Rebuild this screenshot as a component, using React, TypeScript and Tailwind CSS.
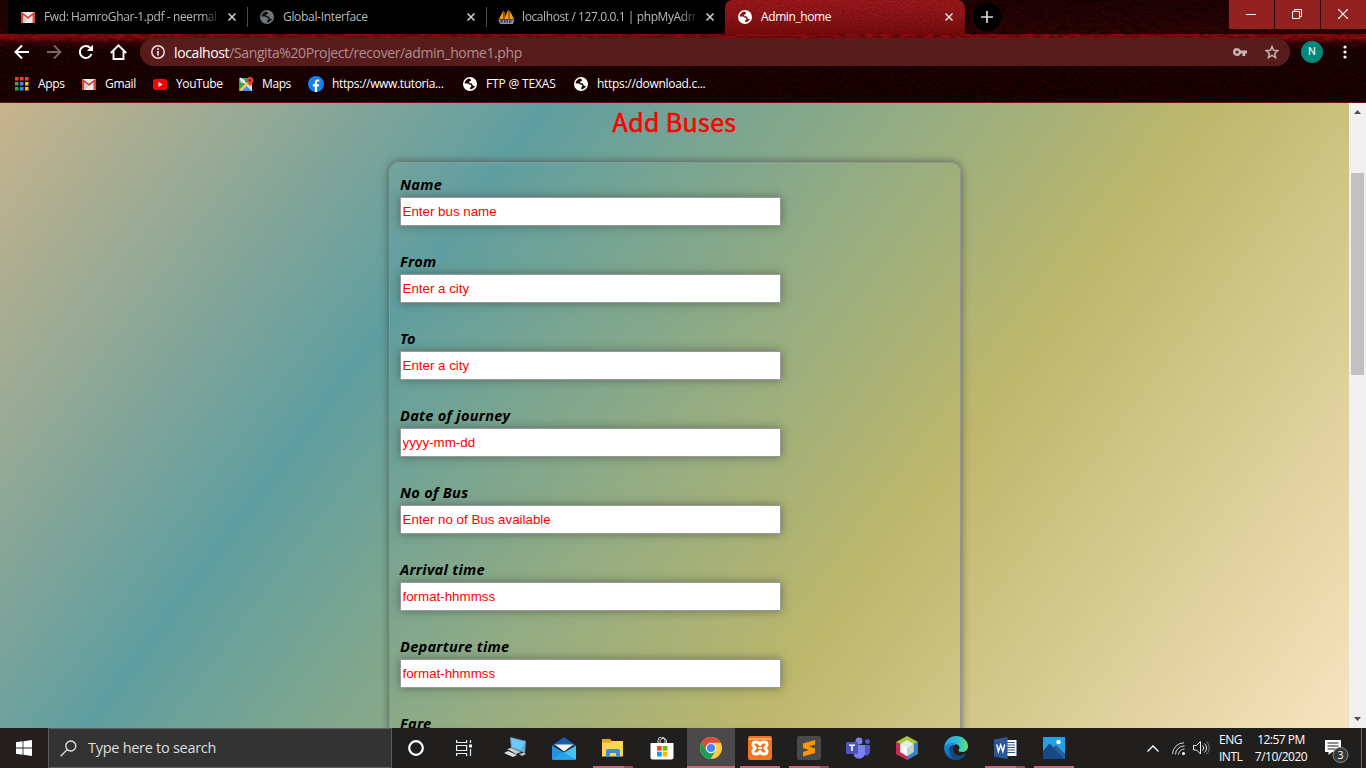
import React from "react";

const ui = "font-['Open_Sans','Noto_Sans',sans-serif]";

function Texture({ id, className, freq, matrix }: { id: string; className: string; freq: string; matrix: string }) {
  return (
    <svg className={"absolute inset-0 h-full w-full pointer-events-none " + className} aria-hidden="true">
      <filter id={id} x="0" y="0" width="100%" height="100%" colorInterpolationFilters="sRGB">
        <feTurbulence type="fractalNoise" baseFrequency={freq} numOctaves={4} seed={7} />
        <feColorMatrix type="matrix" values={matrix} />
      </filter>
      <rect width="100%" height="100%" filter={`url(#${id})`} />
    </svg>
  );
}

function GmailIcon() {
  return (
    <svg width="14" height="11" viewBox="0 0 14 11" className="shrink-0">
      <rect width="14" height="11" rx="0.8" fill="#e9e9e9" />
      <path d="M0 .8v9.4c0 .5.3.8.8.8H2.4V3.3L7 6.9l4.600-3.600V11h1.600c.5 0 .8-.3.8-.8V.8c0-.5-.4-.8-.9-.8L7 4.700.900 0C.4 0 0 .3 0 .8z" fill="#d9453a" />
      <path d="M2.400 11V4L6.600 7.300 3 11z" fill="#cfcfcf" />
    </svg>
  );
}

function Globe({ fg, bg }: { fg: string; bg: string }) {
  return (
    <svg width="14" height="14" viewBox="0 0 14 14" className="relative shrink-0">
      <circle cx="7" cy="7" r="7" fill={fg} />
      <path d="M6.200 1.600C3.800 2 1.800 4 1.600 6.400l3.300.1c.8.1 1 .8 1.400 1.100.7.4 1.700.1 2 .8.3.800-.3 1-.7 1.500-.4.6-.2 1.700-.9 2.400 2.200.2 4.600-1.200 5.400-3.500-.8.4-1.700.4-2.300-.2-.6-.7-.3-1.500-1-2C8 6 6.800 6.500 6.200 5.700c-.4-.7.3-1.100.9-1.400.7-.3 1.100-.7 1-1.300-.2-.7-1.100-.8-1.900-1.400z" fill={bg} />
    </svg>
  );
}

function SailIcon() {
  return (
    <svg width="17" height="16" viewBox="0 0 17 16" className="shrink-0">
      <path d="M5.500 1 1 10h4.500zM10.500 0 6.200 10h4.600zM12 2l-.5 8H16z" fill="#f89c0e" />
      <path d="M6.500 3v7M11.500 2v8" stroke="#a35f0c" strokeWidth="1" />
      <path d="M0 10.500h16.500l-1.500 4.500H2z" fill="#8b8da8" />
      <path d="M3 14v-2.500h1.500V13H3M6.500 14v-3l1.500 2 1.500-2v3M11.500 14v-2.500H13V13h-1.500" stroke="#34354e" fill="none" strokeWidth=".8" />
    </svg>
  );
}

function CloseX({ color = "#d5d5d5" }: { color?: string }) {
  return (
    <svg width="8" height="8" viewBox="0 0 8 8" className="shrink-0">
      <path d="M.5.5l7 7M7.500.5l-7 7" stroke={color} strokeWidth="1.500" />
    </svg>
  );
}

function TabStrip() {
  return (
    <div className={"relative flex h-[34px] items-start text-[12px] " + ui}>
      <div className="ml-[8px] flex h-[34px] w-[240px] items-center bg-black pl-[13px]">
        <GmailIcon />
        <span className="ml-[9px] w-[176px] overflow-hidden whitespace-nowrap tracking-[-0.4px] text-[#b9b9b9] [mask-image:linear-gradient(to_right,black_90%,transparent)]">Fwd: HamroGhar-1.pdf - neermal</span>
        <span className="ml-[8px] flex"><CloseX /></span>
      </div>
      <div className="flex h-[34px] w-[239px] items-center bg-black">
        <i className="-ml-px h-[20px] w-px bg-[#505050]" />
        <span className="ml-[12px] flex"><Globe fg="#70757a" bg="#101010" /></span>
        <span className="ml-[9px] w-[176px] whitespace-nowrap tracking-[-0.32px] text-[#b9b9b9]">Global-Interface</span>
        <span className="ml-[8px] flex"><CloseX /></span>
      </div>
      <div className="flex h-[34px] w-[238px] items-center rounded-br-[8px] bg-black">
        <i className="-ml-px h-[20px] w-px bg-[#505050]" />
        <span className="ml-[11px] flex"><SailIcon /></span>
        <span className="ml-[7px] w-[176px] overflow-hidden whitespace-nowrap tracking-[-0.4px] text-[#b9b9b9] [mask-image:linear-gradient(to_right,black_90%,transparent)]">localhost / 127.0.0.1 | phpMyAdm</span>
        <span className="ml-[8px] flex"><CloseX /></span>
      </div>
      <div className="relative flex h-[34px] w-[240px] items-center overflow-hidden rounded-t-[8px] bg-linear-to-b from-[#9f191d] via-[#8f1519] to-[#790a0c] pl-[13px] text-white">
        <Texture id="tabTex" className="opacity-25" freq="0.4 0.6" matrix="0 0 0 0 0.2  0 0 0 0 0  0 0 0 0 0  2.5 0 0 0 -0.9" />
        <Globe fg="#ffffff" bg="#8f171b" />
        <span className="relative ml-[9px] w-[176px] whitespace-nowrap tracking-[-0.4px]">Admin_home</span>
        <span className="relative ml-[8px] flex"><CloseX color="#f3dede" /></span>
      </div>
      <div className="ml-[8px] mt-[3px] flex h-[28px] w-[28px] items-center justify-center rounded-full bg-black">
        <svg width="12" height="12" viewBox="0 0 12 12"><path d="M6 0v12M0 6h12" stroke="#d8d8d8" strokeWidth="1.700" /></svg>
      </div>
      <div className="ml-auto flex h-[29px] gap-px bg-[#2a0505]">
        <div className="flex w-[45px] items-center justify-center bg-[#92211f] pb-px pr-[2px]">
          <svg width="10" height="10"><path d="M0 5.500h10" stroke="#fff" /></svg>
        </div>
        <div className="flex w-[45px] items-center justify-center bg-[#92211f] pb-px pr-[2px]">
          <svg width="10" height="10" fill="none" stroke="#fff"><path d="M.5 2.500h7v7h-7zM2.500 2.500v-2h7v7h-2" /></svg>
        </div>
        <div className="flex w-[45px] items-center justify-center bg-[#92211f] pb-px pr-[2px]">
          <svg width="10" height="10"><path d="M0 0l10 10M10 0L0 10" stroke="#fff" strokeWidth="1.200" /></svg>
        </div>
      </div>
    </div>
  );
}

function Toolbar() {
  return (
    <div className="relative flex h-[36px] items-center">
      <svg className="ml-[14px]" width="16" height="16" viewBox="0 0 16 16" fill="none" stroke="#fff" strokeWidth="2"><path d="M15 8H2M8 1.500 1.500 8 8 14.500" /></svg>
      <svg className="ml-[16px]" width="16" height="16" viewBox="0 0 16 16" fill="none" stroke="#7d6565" strokeWidth="1.800"><path d="M1 8h13M8 1.500 14.500 8 8 14.500" /></svg>
      <svg className="ml-[16px]" width="16" height="16" viewBox="0 0 16 16"><path d="M13.500 10A6 6 0 1 1 12.400 4" fill="none" stroke="#fff" strokeWidth="2" /><path d="M15 .8v6.200H8.800z" fill="#fff" /></svg>
      <svg className="ml-[16px]" width="17" height="16" viewBox="0 0 17 16" fill="none" stroke="#fff" strokeWidth="1.900"><path d="M.8 9 8.500 1.400 16.200 9M3.500 7v8h10V7" /></svg>
      <div className={"ml-[13px] flex h-[28px] w-[1150px] items-center rounded-full bg-[#581c1d] pl-[11px] " + ui}>
        <svg width="14" height="14" viewBox="0 0 14 14"><circle cx="7" cy="7" r="6.200" fill="none" stroke="#eee0e0" strokeWidth="1.500" /><path d="M7 6v4.500M7 3.300v1.600" stroke="#eee0e0" strokeWidth="1.700" /></svg>
        <span className="ml-[9px] whitespace-nowrap text-[14px] tracking-[-0.38px] text-[#ae8e8e]"><span className="text-white">localhost</span>/Sangita%20Project/recover/admin_home1.php</span>
        <svg className="ml-auto" width="14" height="8" viewBox="0 0 14 8"><path fillRule="evenodd" fill="#c6b6b6" d="M4 0a4 4 0 1 0 3.700 5.500H9.500V8h2.700V5.500H14v-3H7.700A4 4 0 0 0 4 0zm0 2.400a1.600 1.600 0 1 1 0 3.200 1.600 1.600 0 0 1 0-3.200z" /></svg>
        <svg className="ml-[18px] mr-[11px]" width="14" height="14" viewBox="0 0 14 14" fill="none" stroke="#c6b6b6" strokeWidth="1.400"><path d="M7 1.500l1.600 3.800 4.200.4-3.200 2.700 1 4.200L7 10.400l-3.600 2.200 1-4.200L1.200 5.700l4.200-.4z" /></svg>
      </div>
      <div className={"ml-[11px] flex h-[22px] w-[22px] items-center justify-center rounded-full bg-[#00897b] text-[11px] text-white font-['Roboto',sans-serif]"}>N</div>
      <svg className="ml-[20px]" width="4" height="14" fill="#fff"><circle cx="2" cy="2" r="1.600" /><circle cx="2" cy="7" r="1.600" /><circle cx="2" cy="12" r="1.600" /></svg>
    </div>
  );
}

function Bookmarks() {
  const dots = ["#e94335", "#e94335", "#e94335", "#34a853", "#4285f4", "#fbbc05", "#34a853", "#4285f4", "#fbbc05"];
  return (
    <div className={"relative flex h-[28px] items-center whitespace-nowrap text-[12px] text-white " + ui}>
      <svg className="ml-[15px]" width="14" height="14">{dots.map((c, i) => <rect key={i} x={(i % 3) * 5} y={Math.floor(i / 3) * 5} width="3.500" height="3.500" fill={c} />)}</svg>
      <span className="ml-[9px] w-[28px] tracking-[-0.3px]">Apps</span>
      <span className="ml-[16px] flex"><GmailIcon /></span>
      <span className="ml-[9px] w-[31px] tracking-[-0.3px]">Gmail</span>
      <svg className="ml-[17px]" width="14" height="11" viewBox="0 0 14 11"><rect width="14" height="11" rx="2.500" fill="#f00" /><path d="M5.500 3v5l4-2.500z" fill="#fff" /></svg>
      <span className="ml-[9px] w-[46px] tracking-[-0.4px]">YouTube</span>
      <svg className="ml-[17px]" width="15" height="15" viewBox="0 0 15 15">
        <rect y="1" width="13" height="13" rx="1" fill="#2fa35a" /><path d="M0 14 7 7l6.500 7z" fill="#4b8df8" /><path d="M1 1l12 12" stroke="#fff" strokeWidth="1.500" /><path d="M0 13 9 4l2 2-8.500 8z" fill="#f4d13a" /><path d="M13 14V8l-3-1-2 2 5 5z" fill="#dcdcdc" /><circle cx="3.500" cy="4" r="1.700" fill="none" stroke="#fff" />
        <path d="M11 0a3.500 3.500 0 0 0-3.500 3.500C7.500 6 10 6.500 11 9.500c1-3 3.500-3.500 3.500-6A3.500 3.500 0 0 0 11 0z" fill="#ea4335" /><circle cx="11" cy="3.500" r="1.300" fill="#8c1b14" />
      </svg>
      <span className="ml-[8px] w-[30px] tracking-[-0.4px]">Maps</span>
      <svg className="ml-[16px]" width="16" height="16" viewBox="0 0 16 16"><circle cx="8" cy="8" r="8" fill="#1580ef" /><path d="M6.800 16v-5.500H4.900V8.200h1.900V6.600c0-2 1.100-3 2.900-3 .8 0 1.500.1 1.500.1v1.900h-1c-1 0-1.200.6-1.200 1.200v1.400h2.100l-.4 2.300H9V16z" fill="#fff" /></svg>
      <span className="ml-[8px] w-[113px] tracking-[-0.35px]">https://www.tutoria...</span>
      <span className="ml-[18px] flex"><Globe fg="#fff" bg="#170304" /></span>
      <span className="ml-[9px] w-[71px] tracking-[-0.15px]">FTP @ TEXAS</span>
      <span className="ml-[17px] flex"><Globe fg="#fff" bg="#170304" /></span>
      <span className="ml-[9px] tracking-[-0.3px]">https://download.c...</span>
    </div>
  );
}

const fields = [
  ["Name", "Enter bus name"],
  ["From", "Enter a city"],
  ["To", "Enter a city"],
  ["Date of journey", "yyyy-mm-dd"],
  ["No of Bus", "Enter no of Bus available"],
  ["Arrival time", "format-hhmmss"],
  ["Departure time", "format-hhmmss"],
  ["Fare", ""],
];

function Page() {
  return (
    <div className="flex h-[625px]">
      <main className="h-full w-[1349px] overflow-hidden bg-[linear-gradient(to_bottom_right,#deb887_0%,#5f9ea0_24.700%,#bdb76b_49.400%,#ffebcd_75%)] bg-[size:1349px_1830px] bg-[position:0_-164px] bg-no-repeat">
        <h1 className="h-[59px] pt-px text-center text-[25px] leading-[35px] tracking-[0.35px] text-[#f00] [-webkit-text-stroke:0.6px_#f00] font-['Noto_Sans_CJK_JP',sans-serif]">Add Buses</h1>
        <form className="ml-[389px] h-[800px] w-[572px] rounded-[10px] border border-[#979299] pl-[10px] pt-[13px] shadow-[0_0_9px_rgba(60,70,60,0.75)]">
          {fields.map(([label, hint]) => (
            <div key={label} className="h-[77px]">
              <label className="block h-[21px] text-[14.600px] font-bold italic leading-[16px] tracking-[0.26px] text-black font-['Noto_Sans',sans-serif]">{label}</label>
              <input className="block h-[29px] w-[381px] border border-[#999] bg-white px-[1.500px] text-[13.330px] text-[#f00] shadow-[0_0_9px_rgba(60,70,60,0.6)] outline-none placeholder:text-[#f00] placeholder:opacity-100 font-['Liberation_Sans',Arial,sans-serif]" placeholder={hint} />
            </div>
          ))}
        </form>
      </main>
      <div className="flex w-[17px] flex-col items-center bg-[#f1f1f1]">
        <svg className="mt-[7px]" width="7" height="4"><path d="M0 4 3.500 0 7 4z" fill="#505050" /></svg>
        <div className="mt-[59px] h-[202px] w-[13px] bg-[#c1c1c1]" />
        <svg className="mb-[7px] mt-auto" width="7" height="4"><path d="M0 0h7L3.500 4z" fill="#505050" /></svg>
      </div>
    </div>
  );
}

function AppButton({ children, line, active, stacked }: { children: React.ReactNode; line?: boolean; active?: boolean; stacked?: boolean }) {
  return (
    <div className={"flex h-[40px] w-[48px] flex-col items-center " + (active ? "bg-[#4c494a]" : "")}>
      <div className="flex h-[38px] items-center justify-center pt-[2px]">{children}</div>
      {line && (
        <div className={"flex h-[2px] " + (active ? "w-[48px]" : "w-[40px]")}>
          <i className="flex-1 bg-[#d4607c]" />
          {stacked && <i className="w-[9px] bg-[#9c4960]" />}
        </div>
      )}
    </div>
  );
}

function Taskbar() {
  return (
    <footer className={"flex h-[40px] bg-[#211e1e] text-white " + ui}>
      <div className="flex w-[48px] items-center justify-center bg-[#261f20]">
        <svg width="16" height="16" viewBox="0 0 16 16" fill="#fff"><path d="M0 2.200 6.600 1.300V7.600H0zM7.400 1.200 16 0v7.600H7.400zM0 8.400h6.600v6.300L0 13.800zM7.400 8.400H16V16l-8.600-1.200z" /></svg>
      </div>
      <div className="flex w-[344px] items-center border border-[#5c5a5a] bg-[#333] pl-[11px]">
        <svg width="17" height="17" viewBox="0 0 17 17" fill="none" stroke="#e5e5e5" strokeWidth="1.300"><circle cx="10.800" cy="6" r="5" /><path d="M7.200 9.600.6 16.200" /></svg>
        <span className="ml-[11px] text-[14.500px] tracking-[-0.28px] text-[#dedede]">Type here to search</span>
      </div>
      <div className="flex w-[48px] items-center justify-center"><svg width="16" height="16"><circle cx="8" cy="8" r="6.800" fill="none" stroke="#fff" strokeWidth="2.200" /></svg></div>
      <div className="flex w-[51px] items-center pl-[16px]">
        <svg width="16" height="16" viewBox="0 0 16 16" fill="none" stroke="#eee" strokeWidth="1.200"><path d="M.6 0v2.500h10V0M.6 5.500h10v5h-10zM.6 16v-2.500h10V16M14.500 0v3M14.500 9v7" /><path d="M13 4.500h3v3h-3z" fill="#fff" stroke="none" /></svg>
      </div>
      <div className="flex gap-px">
        <AppButton>
          <svg width="24" height="24" viewBox="0 0 24 24"><path d="M7 1l16 4-1 12L8 12z" fill="#7e98ac" /><path d="M8 2.300 22 6l-1 9.500L9 11z" fill="#49b5f5" /><path d="M8 2.300 22 6l-5 8L9 11z" fill="#6bcbff" /><path d="M4 13l4-1 10 4-5 2z" fill="#c6d0d6" /><path d="M1 17l4-2 9 4-4 2z" fill="#dbe1e5" /><path d="M16 18l5-1.500 2 1.500-4 2z" fill="#b6c1c8" /></svg>
        </AppButton>
        <AppButton>
          <svg width="24" height="23" viewBox="0 0 24 23"><path d="M12 0 24 8.500H0z" fill="#1260ae" /><path d="M0 8.500 24 22.500H0z" fill="#2492e0" /><path d="M24 8.500v14H0z" fill="#3fc4f3" /><path d="M2.500 7.500h19L12 14.500z" fill="#f5f5f5" /><path d="M12 15.500l12 7H0z" fill="#23a5ea" /></svg>
        </AppButton>
        <AppButton line stacked>
          <svg width="22" height="18" viewBox="0 0 22 18"><path d="M0 0h8l2 2h11v3H0z" fill="#e8a317" /><path d="M0 3.500h8.500l2-1.500H21v15.500H0z" fill="#fcd35e" /><path d="M4 18v-6a2 2 0 0 1 2-2h10a2 2 0 0 1 2 2v6h-4v-4H8v4z" fill="#3b8ed5" /></svg>
        </AppButton>
        <AppButton>
          <svg width="24" height="23" viewBox="0 0 24 23"><path d="M8 6V3.500a3.500 3.500 0 0 1 7 0V6M10 6V3.500a3.500 3.500 0 0 1 6.500 0V6" fill="none" stroke="#dcdcdc" strokeWidth="1" /><path d="M.5 6h23v14.500a2 2 0 0 1-2 2h-19a2 2 0 0 1-2-2z" fill="#fff" /><path d="M7 9h4.700v4.700H7z" fill="#f25022" /><path d="M12.700 9h4.800v4.700h-4.800z" fill="#7fba00" /><path d="M7 14.700h4.700v4.800H7z" fill="#00a4ef" /><path d="M12.700 14.700h4.800v4.800h-4.800z" fill="#ffb900" /></svg>
        </AppButton>
        <AppButton active line>
          <svg width="22" height="22" viewBox="0 0 22 22"><circle cx="11" cy="11" r="11" fill="#ffcd42" /><path d="M11 11 6.300 13.800 1.500 5.500A11 11 0 0 1 20.600 5.700H11z" fill="#dd4b3e" /><path d="M1.500 5.500A11 11 0 0 0 10.600 22l4.800-8.300L11 11l-4.700 2.800z" fill="#1a9e5c" /><circle cx="11" cy="11" r="5.200" fill="#f4f4f4" /><circle cx="11" cy="11" r="4.100" fill="#4788f4" /></svg>
        </AppButton>
        <AppButton line>
          <svg width="24" height="24" viewBox="0 0 24 24"><rect width="24" height="24" rx="2" fill="#f1751f" /><path d="M1 3h22" stroke="#f8a468" strokeWidth="2" /><path d="M12 8.500C11 5.500 5 5 5 8.500c0 2 1.500 2.500 2.200 3.500C6.500 13 5 13.500 5 15.500 5 19 11 18.500 12 15.500c1 3 7 3.500 7 0 0-2-1.500-2.500-2.200-3.500.7-1 2.200-1.500 2.200-3.500 0-3.500-6-3-7 0z" fill="none" stroke="#fff" strokeWidth="3" strokeLinejoin="round" /><path d="M10 12h4" stroke="#fff" strokeWidth="2" /></svg>
        </AppButton>
        <AppButton line stacked>
          <svg width="24" height="24" viewBox="0 0 24 24"><rect width="24" height="24" rx="2" fill="#4a4a4a" /><path d="M18 4v4.500l-6 2 6 2V17L6 20.500V16l6-2-6-2V7.500z" fill="#ff9800" /></svg>
        </AppButton>
        <AppButton>
          <svg width="25" height="23" viewBox="0 0 25 23"><circle cx="13" cy="4" r="3.500" fill="#7b83eb" /><circle cx="21.500" cy="4.500" r="2.500" fill="#5059c9" /><path d="M17 8h7v7a4.500 4.500 0 0 1-7 3z" fill="#5059c9" /><path d="M8 8h11v8a6 6 0 0 1-11 3z" fill="#7b83eb" /><rect y="5" width="12" height="12" rx="1" fill="#4b53bc" /><path d="M3 8.300h6M6 8.300V14" stroke="#fff" strokeWidth="1.600" /></svg>
        </AppButton>
        <AppButton>
          <svg width="22" height="24" viewBox="0 0 22 24"><path d="M11 0 22 6l-11 6L0 6z" fill="#aac63b" /><path d="M0 6l11 6v12L0 18z" fill="#c52e54" /><path d="M22 6v12l-11 6V12z" fill="#3b80c3" /><path d="M11 4 17.500 8v8L11 20l-6.500-4V8z" fill="#e6ece7" /><path d="M4.500 8 11 12v8l-6.500-4z" fill="#f9fbf9" /><path d="M11 12l6.500-4v8L11 20z" fill="#c3d5c8" /></svg>
        </AppButton>
        <AppButton>
          <svg width="24" height="24" viewBox="0 0 24 24"><defs><linearGradient id="edgeTop"><stop offset=".2" stopColor="#2ca7e2" /><stop offset=".65" stopColor="#34c6cf" /><stop offset="1" stopColor="#6be35c" /></linearGradient><linearGradient id="edgeLow" x2="0" y2="1"><stop stopColor="#1b93db" /><stop offset="1" stopColor="#0e58a6" /></linearGradient></defs><path d="M.2 11C1 4.500 6 0 12 0c7 0 12 5 12 10 0 4-3 6-6 6-2.500 0-4-1-3.500-2 1-1 1.200-2 .8-3.400C13 7 5 6 .2 11z" fill="url(#edgeTop)" /><path d="M.2 11C3 6.500 9 6 12.500 8.500 10 8.500 8.500 11 8.800 14c.4 4.500 5 6.500 9 5.500 1.700-.4 3.300-1.500 4-1.500-2 3.700-5.600 6-9.800 6C5 24-.5 18 .2 11z" fill="url(#edgeLow)" /><path d="M5 14c.5 5 4 9 8.500 9.800 3.500-.3 6.500-2.500 8-5.300-5 3-12.500 1-12.700-4.500-.1-2 .7-4 2-5C7 8.500 4.700 11 5 14z" fill="#12477f" /></svg>
        </AppButton>
        <AppButton line stacked>
          <svg width="23" height="22" viewBox="0 0 23 22"><path d="M12 3h10.500v16H12z" fill="#fff" /><path d="M13 5.500h8M13 8h8M13 10.500h8M13 13h8M13 15.500h8" stroke="#2b579a" strokeWidth="1.100" /><path d="M13.500 0v22L0 19.500v-17z" fill="#2b579a" /><path d="M2.800 7.500l1.600 7L6.700 8l2.200 6.500 1.800-7" fill="none" stroke="#fff" strokeWidth="1.400" /></svg>
        </AppButton>
        <AppButton line>
          <svg width="22" height="22" viewBox="0 0 22 22"><path d="M0 0h22v22H0z" fill="#279fe4" /><path d="M0 22V14l6.500-7.500L22 22z" fill="#164a86" /><path d="M10 10.500l3-2.500 9 9v5h-1z" fill="#285d98" /><circle cx="15.500" cy="5" r="2.200" fill="#fff" /></svg>
        </AppButton>
      </div>
      <div className="ml-auto flex items-center">
        <svg width="12" height="7" fill="none" stroke="#fff" strokeWidth="1.300"><path d="M.5 6.500 6 1l5.500 5.500" /></svg>
        <svg className="ml-[13px]" width="13" height="13" viewBox="0 0 13 13" fill="none" stroke="#d5d5d5" strokeWidth="1"><path d="M.5 12A11.500 11.500 0 0 1 12 .8M3.500 12.500A8.500 8.500 0 0 1 12.500 4M6.500 12.500a6 6 0 0 1 6-5.500" /><circle cx="11.500" cy="11.500" r="1.500" fill="#fff" stroke="none" /></svg>
        <svg className="ml-[8px]" width="17" height="14" viewBox="0 0 17 14" fill="none" stroke="#eee" strokeWidth="1"><path d="M.5 4.500h3l4-4v12.500l-4-4h-3zM9.500 4.500a3.500 3.500 0 0 1 0 5" /><path d="M11.500 2.500a6 6 0 0 1 0 9" /><path d="M13.500.5a9 9 0 0 1 0 13" stroke="#777" /></svg>
        <div className="ml-[9px] w-[26px] whitespace-nowrap text-[12px] leading-[17px] tracking-[-0.5px]"><div>ENG</div><div>INTL</div></div>
        <div className="ml-[7px] w-[58px] whitespace-nowrap text-center text-[12px] leading-[17px] tracking-[-0.5px]"><div>12:57 PM</div><div>7/10/2020</div></div>
        <div className="relative ml-[14px] h-[20px] w-[37px]">
          <svg width="26" height="26" viewBox="0 0 26 26"><path d="M1 2h16v12H8l-3.500 3V14H1z" fill="#fff" /><path d="M3.500 5h11M3.500 8h11M3.500 11h8" stroke="#222" strokeWidth="1.200" /><circle cx="16.500" cy="17" r="7.500" fill="#37383a" stroke="#8b8b8b" strokeWidth="1" /></svg>
          <span className="absolute left-[9px] top-[9px] w-[15px] text-center text-[10.500px] leading-[16px]">3</span>
        </div>
        <i className="mr-[4px] h-[40px] w-px bg-[#686666]" />
      </div>
    </footer>
  );
}

export default function App() {
  return (
    <div className="flex h-[768px] w-[1366px] flex-col overflow-hidden">
      <header className="relative h-[103px] overflow-hidden border-b border-[#6b1015] bg-[linear-gradient(#180203_0,#260405_34px,#8c0b10_34px,#8a0b10_38px,#300406_43px,#150203_50px,#120102_100%)]">
        <Texture id="barTex" className="opacity-30" freq="0.12 0.3" matrix="0 0 0 0 0  0 0 0 0 0  0 0 0 0 0  4 0 0 0 -1.6" />
        <Texture id="grain" className="opacity-30" freq="0.5 0.7" matrix="0 0 0 0 0.42  0 0 0 0 0.02  0 0 0 0 0.03  3 0 0 0 -1.3" />
        <TabStrip />
        <Toolbar />
        <Bookmarks />
      </header>
      <Page />
      <Taskbar />
    </div>
  );
}
